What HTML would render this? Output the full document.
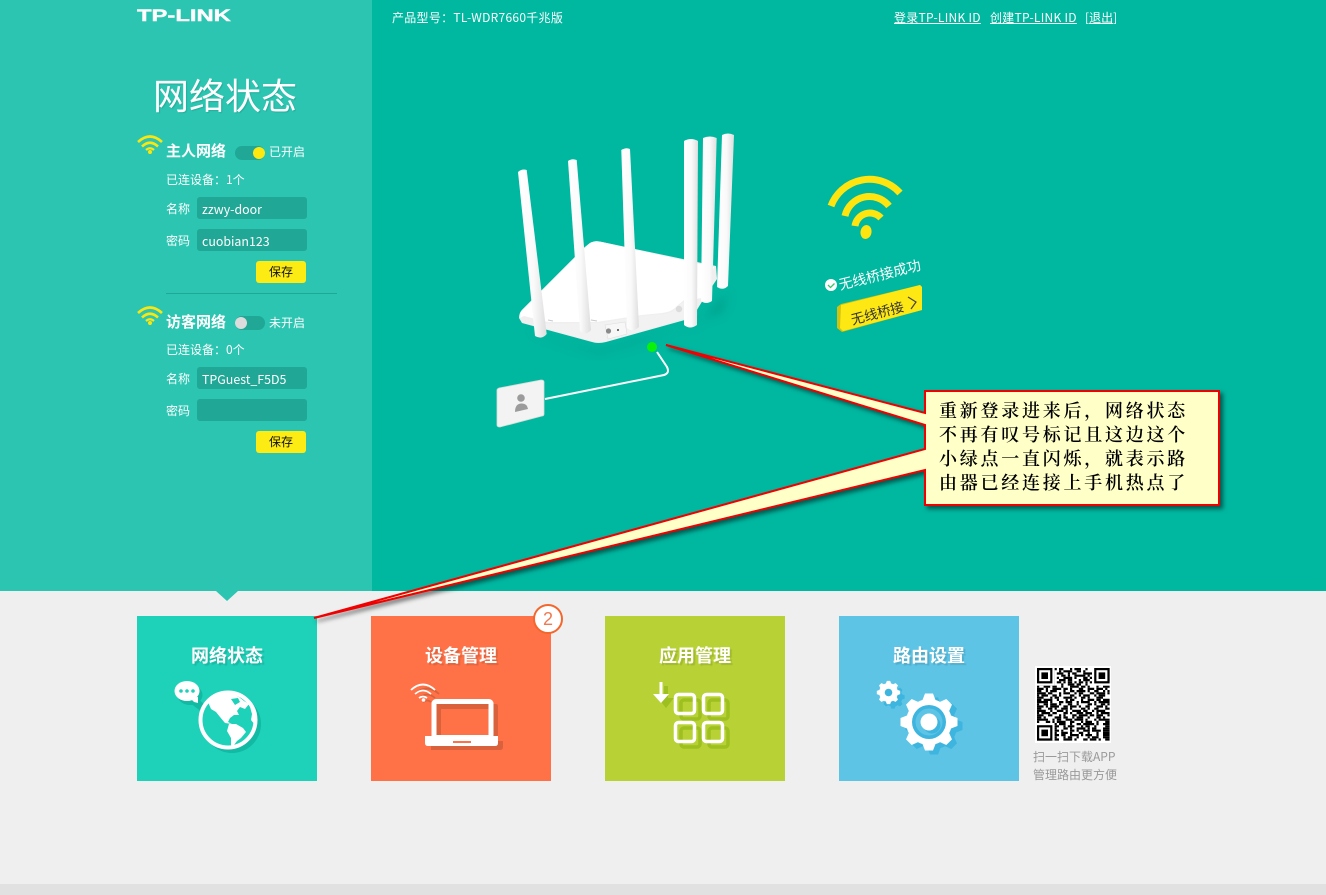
<!DOCTYPE html>
<html lang="zh-CN">
<head>
<meta charset="utf-8">
<title>网络状态</title>
<style>
html,body{margin:0;padding:0;width:1326px;height:895px;overflow:hidden;background:#efefef;}
body{position:relative;font-family:"Liberation Sans","Noto Sans CJK SC",sans-serif;color:#fff;}
.abs{position:absolute;}
.t{position:absolute;white-space:nowrap;line-height:20px;height:20px;font-size:12px;font-family:"Noto Sans CJK SC","Liberation Sans",sans-serif;}
.h{letter-spacing:.28px;}
.v{font-size:12.4px;}
.in{position:absolute;left:197px;width:110px;height:22px;background:#20a795;border-radius:3px;}
.btn{position:absolute;left:256px;width:50px;height:22px;background:#fdeb14;border-radius:3px;color:#111;font-size:12px;line-height:22px;text-align:center;font-family:"Noto Sans CJK SC",sans-serif;}
.tg{position:absolute;left:235px;width:30px;height:14px;background:#20a795;border-radius:7px;}
.card{position:absolute;top:616px;width:180px;height:165px;}
.ct{position:absolute;left:0;width:180px;top:26px;text-align:center;font-size:18px;line-height:26px;font-weight:700;color:#fff;text-shadow:2px 2px 1px rgba(0,0,0,.12);font-family:"Noto Sans CJK SC",sans-serif;}
.cl{position:absolute;left:939px;white-space:nowrap;color:#000;font-size:18px;letter-spacing:2.75px;line-height:24px;height:24px;font-family:"Noto Serif CJK SC","Liberation Serif",serif;font-weight:600;}
svg{position:absolute;left:0;top:0;overflow:visible;}
a{color:#fff;text-decoration:underline;}
</style>
</head>
<body>
<div class="abs" style="left:0;top:0;width:1326px;height:591px;background:#00b7a0;"></div>
<div class="abs" style="left:0;top:0;width:372px;height:591px;background:#2bc5b1;"></div>
<div class="abs" style="left:0;top:884px;width:1326px;height:11px;background:#e1e1e1;"></div>

<div class="abs" style="left:137px;top:5px;font:700 17px/22px 'Liberation Sans',sans-serif;-webkit-text-stroke:.4px #fff;transform-origin:0 50%;transform:scaleX(1.4);white-space:nowrap;">TP-LINK</div>
<div class="t h" style="left:392px;top:8px;">产品型号：TL-WDR7660千兆版</div>
<a class="t h" style="left:894px;top:8px;">登录TP-LINK ID</a>
<a class="t h" style="left:990px;top:8px;">创建TP-LINK ID</a>
<div class="t" style="left:1085px;top:8px;">[<span style="text-decoration:underline">退出</span>]</div>

<div class="t" style="left:153px;top:69px;height:50px;line-height:50px;font-size:36px;text-shadow:1px 1px 1px rgba(0,0,0,.12);">网络状态</div>

<!-- host network -->
<div class="t" style="left:166px;top:141px;font-size:15px;font-weight:700;">主人网络</div>
<div class="tg" style="top:146px;"></div>
<div class="abs" style="left:253px;top:147px;width:12px;height:12px;border-radius:50%;background:#fde910;"></div>
<div class="t" style="left:269px;top:142px;">已开启</div>
<div class="t" style="left:166px;top:170px;">已连设备：1个</div>
<div class="t" style="left:166px;top:199px;">名称</div>
<div class="in" style="top:197px;"></div>
<div class="t v" style="left:202px;top:199px;">zzwy-door</div>
<div class="t" style="left:166px;top:231px;">密码</div>
<div class="in" style="top:229px;"></div>
<div class="t v" style="left:202px;top:231px;">cuobian123</div>
<div class="btn" style="top:261px;">保存</div>
<div class="abs" style="left:166px;top:293px;width:171px;height:1px;background:#20a795;"></div>

<!-- guest network -->
<div class="t" style="left:166px;top:312px;font-size:15px;font-weight:700;">访客网络</div>
<div class="tg" style="top:316px;"></div>
<div class="abs" style="left:235px;top:317px;width:12px;height:12px;border-radius:50%;background:#dcdcdc;"></div>
<div class="t" style="left:269px;top:313px;">未开启</div>
<div class="t" style="left:166px;top:340px;">已连设备：0个</div>
<div class="t" style="left:166px;top:369px;">名称</div>
<div class="in" style="top:367px;"></div>
<div class="t v" style="left:202px;top:369px;">TPGuest_F5D5</div>
<div class="t" style="left:166px;top:401px;">密码</div>
<div class="in" style="top:399px;"></div>
<div class="btn" style="top:431px;">保存</div>

<!-- graphics -->
<svg width="1326" height="895" viewBox="0 0 1326 895">
<defs>
<linearGradient id="ant" x1="0" x2="1" y1="0" y2="0"><stop offset="0" stop-color="#ffffff"/><stop offset=".55" stop-color="#fafafa"/><stop offset="1" stop-color="#dedede"/></linearGradient>
<filter id="bl"><feGaussianBlur stdDeviation="5"/></filter>
<g id="wf" fill="none" stroke="#fbe610" stroke-width="2.600">
<path d="M138 142Q150 131 162 142"/><path d="M142 146.500Q150 139 158 146.500"/><path d="M146 150Q150 146.500 154 150" stroke-width="2.200"/>
<circle cx="150" cy="152" r="2" fill="#fbe610" stroke="none"/>
</g>
<g id="tooth"><path d="M-6.500 -22L-4 -28.500L4 -28.500L6.500 -22Z"/></g>
<g id="gear">
<circle r="23"/>
<use href="#tooth"/><use href="#tooth" transform="rotate(45)"/><use href="#tooth" transform="rotate(90)"/><use href="#tooth" transform="rotate(135)"/><use href="#tooth" transform="rotate(180)"/><use href="#tooth" transform="rotate(225)"/><use href="#tooth" transform="rotate(270)"/><use href="#tooth" transform="rotate(315)"/>
</g>
</defs>

<use href="#wf"/>
<use href="#wf" transform="translate(0,171)"/>

<!-- triangle marker -->
<path d="M216 591H238L227 601Z" fill="#2bc5b1"/>

<!-- router shadow -->
<path d="M525 330L598 351L700 322L728 292L722 312L640 342L598 354Z" fill="#00917f" opacity=".6" filter="url(#bl)"/>
<!-- router body -->
<path d="M590 243Q595 240 602 242L716 266L717 279L703 300L692 318L606 342Q598 344 592 342L522 323L519 318Q519 313 522 310L585 247Z" fill="#efefef"/>
<path d="M590 243Q595 240 602 242L714 267L703 298L684 300L677 306Q672 312 662 313L642 315L597 322L548 322L524 316L520 318Q519 313 522 310L585 247Z" fill="#fff"/>
<path d="M600 323L642 316L665 314Q676 312 680 304L687 301L697 305L690 317L606 341Q598 343 592 341L530 324Z" fill="#f2f2f2"/>
<path d="M605 325L625 322L627 334L608 339Z" fill="#f7f7f7" stroke="#dedede" stroke-width=".6"/>
<circle cx="608.500" cy="331" r="2.600" fill="#8a8a8a"/><circle cx="618" cy="330" r="1" fill="#444"/>
<circle cx="679" cy="309" r="3.200" fill="#dcdcdc"/>
<path d="M548 320L553 321M591 320L597 321" stroke="#c9c9c9" stroke-width="1"/>
<!-- antennas -->
<path d="M722 135Q728 132 734 135L728 286Q723 291 717 287Z" fill="url(#ant)"/>
<path d="M703 138Q710 135 716.700 138L712 301Q706 305 701 301Z" fill="url(#ant)"/>
<path d="M518 172Q522 168.500 526.700 170L546.700 334Q542 340 535 336Z" fill="url(#ant)"/>
<path d="M568 161Q572 158 576.700 160L591 330Q586 336 580 331Z" fill="url(#ant)"/>
<path d="M621.300 150Q626 147 630 149L639 327Q633 333 627 328Z" fill="url(#ant)"/>
<path d="M684 141Q691 137 698 141L697 325Q690 330 684 325Z" fill="url(#ant)"/>

<!-- green light and cable -->
<path d="M657 352L667 367Q670 373 664 375L545 399" fill="none" stroke="#fff" stroke-width="2"/>
<circle cx="652" cy="347" r="5" fill="#08f20a"/>
<path d="M499 388L541 380Q544 380 544 382L544 414Q544 416 542 416L500 427Q497 427 497 425L497 390Q497 389 499 388Z" fill="#f3f3f3" stroke="#d5ddd9" stroke-width=".8"/>
<circle cx="521" cy="398" r="3.800" fill="#9b9b9b"/>
<path d="M515 412Q515 404 521 403.500Q527 403 528 409Z" fill="#9b9b9b"/>

<!-- big wifi -->
<g fill="none" stroke="#fee50f" stroke-width="7">
<path d="M831 206A41 41 0 0 1 900 193"/>
<path d="M845 216A25 25 0 0 1 889 206"/>
<path d="M855 226A15 15 0 0 1 881 218"/>
</g>
<ellipse cx="866" cy="232" rx="5.500" ry="7" fill="#fee50f" transform="rotate(10 866 232)"/>
<circle cx="831" cy="285" r="6" fill="#fff"/>
<path d="M828 285L830.500 287.500L834.500 283.500" stroke="#39c46a" stroke-width="1.300" fill="none"/>
<path d="M837 307L841 304L920 285L922 287L922 310L842 332L837 328Z" fill="#d2c210"/>
<path d="M841 305L920 285L922 287L922 310L843 331L840 328Z" fill="#fde813"/>
<path d="M908 297L916 302L911 309" fill="none" stroke="#444" stroke-width="1.200"/>
</svg>

<div class="t" style="left:839px;top:275px;font-size:14px;transform:rotate(-14deg);transform-origin:0 50%;">无线桥接成功</div>
<div class="t" style="left:851px;top:309px;font-size:13.500px;color:#333;transform:rotate(-15deg);transform-origin:0 50%;">无线桥接</div>

<div class="card" style="left:137px;background:#1ed1b9;"><div class="ct">网络状态</div></div>
<div class="card" style="left:371px;background:#ff7247;"><div class="ct">设备管理</div></div>
<div class="card" style="left:605px;background:#b8d235;"><div class="ct">应用管理</div></div>
<div class="card" style="left:839px;background:#5dc4e6;"><div class="ct">路由设置</div></div>

<svg width="1326" height="895" viewBox="0 0 1326 895">
<!-- globe -->
<path d="M192 694L204 704L206 712L202 712L190 703Z" fill="#12b9a3"/>
<ellipse cx="190" cy="695" rx="12.500" ry="10" fill="#12b9a3"/>
<circle cx="232" cy="724" r="29" fill="#12b9a3"/>
<circle cx="228" cy="720" r="27.500" fill="#1ed1b9" stroke="#fff" stroke-width="4"/>
<path d="M208 702L213 696L222 694L231 693L239 697L244 701L249 704L245 709L240 707L237 711L239 715L234 715L230 718L228 722L232 724L225 723L220 717L216 712L211 709Z" fill="#fff"/>
<path d="M229 724L236 724L243 728L246 732L241 738L237 741L234 745L231 746L231 738L227 731Z" fill="#fff"/>
<path d="M250 707L255 715L255 725L251 720L252 714Z" fill="#fff"/>
<path d="M231 699L238 698L240 702L235 705Z" fill="#1ed1b9"/>
<ellipse cx="187" cy="691" rx="12.500" ry="10" fill="#fff"/>
<path d="M190 698L198 697L198 703L194 702Z" fill="#fff"/>
<circle cx="181" cy="691" r="1.800" fill="#1ed1b9"/><circle cx="187" cy="691" r="1.800" fill="#1ed1b9"/><circle cx="193" cy="691" r="1.800" fill="#1ed1b9"/>

<!-- laptop -->
<path d="M438 704H496Q498 704 498 706V741H503V747Q503 750 500 750H431L431 741H438Z" fill="#d9623c"/>
<rect x="434" y="701.500" width="57" height="36" rx="2" fill="#d9623c" stroke="#fff" stroke-width="5"/>
<path d="M441 709H488.500V735H441Z" fill="#ff7247"/>
<path d="M425 736H498V743Q498 746 495 746H428Q425 746 425 743Z" fill="#fff"/>
<rect x="453" y="741" width="18" height="2" fill="#ff7247"/>
<g fill="none" stroke="#d9623c" stroke-width="1.800" transform="translate(4,4)">
<path d="M411 690Q423 679 435 690"/><path d="M415 694Q423 687 431 694"/><path d="M419 698Q423 695 427 698"/>
</g>
<g fill="none" stroke="#fff" stroke-width="1.800">
<path d="M411 690Q423 679 435 690"/><path d="M415 694Q423 687 431 694"/><path d="M419 698Q423 695 427 698"/>
</g>
<circle cx="423.500" cy="700" r="1.800" fill="#fff"/>

<!-- apps -->
<g fill="none" stroke="#9dbf1f" stroke-width="3.500" transform="translate(5.500,5.500)">
<rect x="675.500" y="694.500" width="19" height="19" rx="3"/><rect x="703.500" y="694.500" width="19" height="19" rx="3"/>
<rect x="675.500" y="722.500" width="19" height="19" rx="3"/><rect x="703.500" y="722.500" width="19" height="19" rx="3"/>
</g>
<path d="M664 686H668V698H674L666 708L658 698H664Z" fill="#9dbf1f"/>
<g fill="none" stroke="#fff" stroke-width="3.500">
<rect x="675.500" y="694.500" width="19" height="19" rx="3"/><rect x="703.500" y="694.500" width="19" height="19" rx="3"/>
<rect x="675.500" y="722.500" width="19" height="19" rx="3"/><rect x="703.500" y="722.500" width="19" height="19" rx="3"/>
</g>
<path d="M659.500 682H662.500V694H669L661 703L653 694H659.500Z" fill="#fff"/>

<!-- gears -->
<use href="#gear" transform="translate(934,726)" fill="#3db5de"/>
<use href="#gear" transform="translate(929,722)" fill="#fff"/>
<circle cx="929" cy="722" r="17" fill="#3db5de"/>
<circle cx="929" cy="722" r="13.500" fill="#5dc4e6"/>
<circle cx="932" cy="725" r="8.500" fill="#3db5de"/>
<circle cx="929" cy="722" r="8.500" fill="#fff"/>
<use href="#gear" transform="translate(893,697) scale(.41)" fill="#3db5de"/>
<use href="#gear" transform="translate(888.500,692.500) scale(.41)" fill="#fff"/>
<circle cx="888.500" cy="692.500" r="3.800" fill="#3db5de"/>

<!-- badge -->
<circle cx="548" cy="619" r="14" fill="#fff" stroke="#f4662c" stroke-width="2"/>

<!-- QR -->
<rect x="1035" y="666" width="76" height="77" fill="#fff"/>
<g transform="translate(1037,668) scale(2.200)" fill="none" stroke="#000" stroke-width="1">
<path stroke-dasharray="9 1 2 3 1 1 3 2 1 2 4 1" d="M0 .5H33"/>
<path stroke-dasharray="8 2 1 1 4 2 2 1 1 3 3 1" d="M0 1.500H33"/>
<path stroke-dasharray="8 1 3 2 1 1 2 3 4 1 1 2" d="M0 2.500H33"/>
<path stroke-dasharray="8 3 2 1 1 2 5 1 1 3 2 2" d="M0 3.500H33"/>
<path stroke-dasharray="8 1 1 2 4 1 1 3 2 1 3 2" d="M0 4.500H33"/>
<path stroke-dasharray="8 2 3 1 2 3 1 1 3 2 1 2" d="M0 5.500H33"/>
<path stroke-dasharray="8 1 2 1 1 1 2 1 1 1 2 1 1 1 2" d="M0 6.500H33"/>
<path stroke-dasharray="8 3 1 2 3 1 2 2 1 4 2" d="M0 7.500H33"/>
<path stroke-dasharray="1 2 3 1 2 2 1 3 4 1 2 1 1 3" d="M0 8.500H33"/>
<path stroke-dasharray="3 1 1 2 4 1 2 1 1 3 2 2 3 1" d="M0 9.500H33"/>
<path stroke-dasharray="2 2 1 1 3 3 1 2 2 1 4 1 1 2" d="M0 10.500H33"/>
<path stroke-dasharray="4 1 2 3 1 1 3 2 1 1 2 3 2 1" d="M0 11.500H33"/>
<path stroke-dasharray="1 1 3 2 2 1 1 4 2 2 1 1 3 2" d="M0 12.500H33"/>
<path stroke-dasharray="3 3 1 1 2 2 4 1 1 2 2 1 1 3" d="M0 13.500H33"/>
<path stroke-dasharray="2 1 4 2 1 3 1 1 2 3 1 2 3 1" d="M0 14.500H33"/>
<path stroke-dasharray="5 1 1 3 2 1 3 2 1 1 4 2 1 1" d="M0 15.500H33"/>
<path stroke-dasharray="1 2 2 1 3 1 1 3 2 2 1 4 2 1" d="M0 16.500H33"/>
<path stroke-dasharray="3 1 1 1 4 2 2 1 3 1 1 2 2 3" d="M0 17.500H33"/>
<path stroke-dasharray="2 3 2 1 1 2 3 1 1 4 2 1 1 2" d="M0 18.500H33"/>
<path stroke-dasharray="4 2 1 2 3 1 1 2 4 1 2 2 1 1" d="M0 19.500H33"/>
<path stroke-dasharray="1 1 4 1 2 3 2 1 1 2 3 1 3 2" d="M0 20.500H33"/>
<path stroke-dasharray="3 2 2 3 1 1 1 3 2 1 4 1 2 1" d="M0 21.500H33"/>
<path stroke-dasharray="2 1 1 4 3 1 2 2 1 1 3 2 1 3" d="M0 22.500H33"/>
<path stroke-dasharray="5 2 1 1 2 2 3 1 4 1 1 3 1 1" d="M0 23.500H33"/>
<path stroke-dasharray="1 3 2 1 1 1 4 2 2 3 1 1 3 2" d="M0 24.500H33"/>
<path stroke-dasharray="9 1 3 2 1 2 2 1 5 1 1 2" d="M0 25.500H33"/>
<path stroke-dasharray="10 2 1 1 3 3 1 1 2 2 1 4" d="M0 26.500H33"/>
<path stroke-dasharray="9 3 2 1 1 2 4 1 1 1 2 3" d="M0 27.500H33"/>
<path stroke-dasharray="10 1 1 3 2 1 1 2 3 1 4 1" d="M0 28.500H33"/>
<path stroke-dasharray="9 2 3 1 1 3 2 2 1 3 1 2" d="M0 29.500H33"/>
<path stroke-dasharray="10 1 2 2 4 1 1 1 3 2 1 2" d="M0 30.500H33"/>
<path stroke-dasharray="9 3 1 1 2 2 1 4 1 1 3 2" d="M0 31.500H33"/>
<path stroke-dasharray="10 2 4 1 1 3 2 1 3 1 1 2" d="M0 32.500H33"/>
</g>
<g transform="translate(1037,668) scale(2.200)">
<rect x="0" y="0" width="8" height="8" fill="#fff"/><rect x="25" y="0" width="8" height="8" fill="#fff"/><rect x="0" y="25" width="8" height="8" fill="#fff"/>
<g fill="none" stroke="#000" stroke-width="1">
<rect x=".5" y=".5" width="6" height="6"/><rect x="26.500" y=".5" width="6" height="6"/><rect x=".5" y="26.500" width="6" height="6"/>
</g>
<rect x="2" y="2" width="3" height="3"/><rect x="28" y="2" width="3" height="3"/><rect x="2" y="28" width="3" height="3"/>
</g>

<!-- callout -->
<path d="M925 391H1219V505H925V470L314 618L925 449V425L666 345L925 413Z" fill="#ffffc8" stroke="#f00000" stroke-width="2" stroke-linejoin="miter" style="filter:drop-shadow(3px 3px 2px rgba(0,0,0,.5));"/>
</svg>

<div class="abs" style="left:538px;top:607px;width:20px;text-align:center;font:18px/24px 'Liberation Sans',sans-serif;color:#ee7a52;">2</div>

<div class="t" style="left:1033px;top:747px;color:#999;">扫一扫下载APP</div>
<div class="t" style="left:1033px;top:765px;color:#999;">管理路由更方便</div>

<div class="cl" style="top:398px;">重新登录进来后，网络状态</div>
<div class="cl" style="top:422px;">不再有叹号标记且这边这个</div>
<div class="cl" style="top:446px;">小绿点一直闪烁，就表示路</div>
<div class="cl" style="top:470px;">由器已经连接上手机热点了</div>
</body>
</html>
